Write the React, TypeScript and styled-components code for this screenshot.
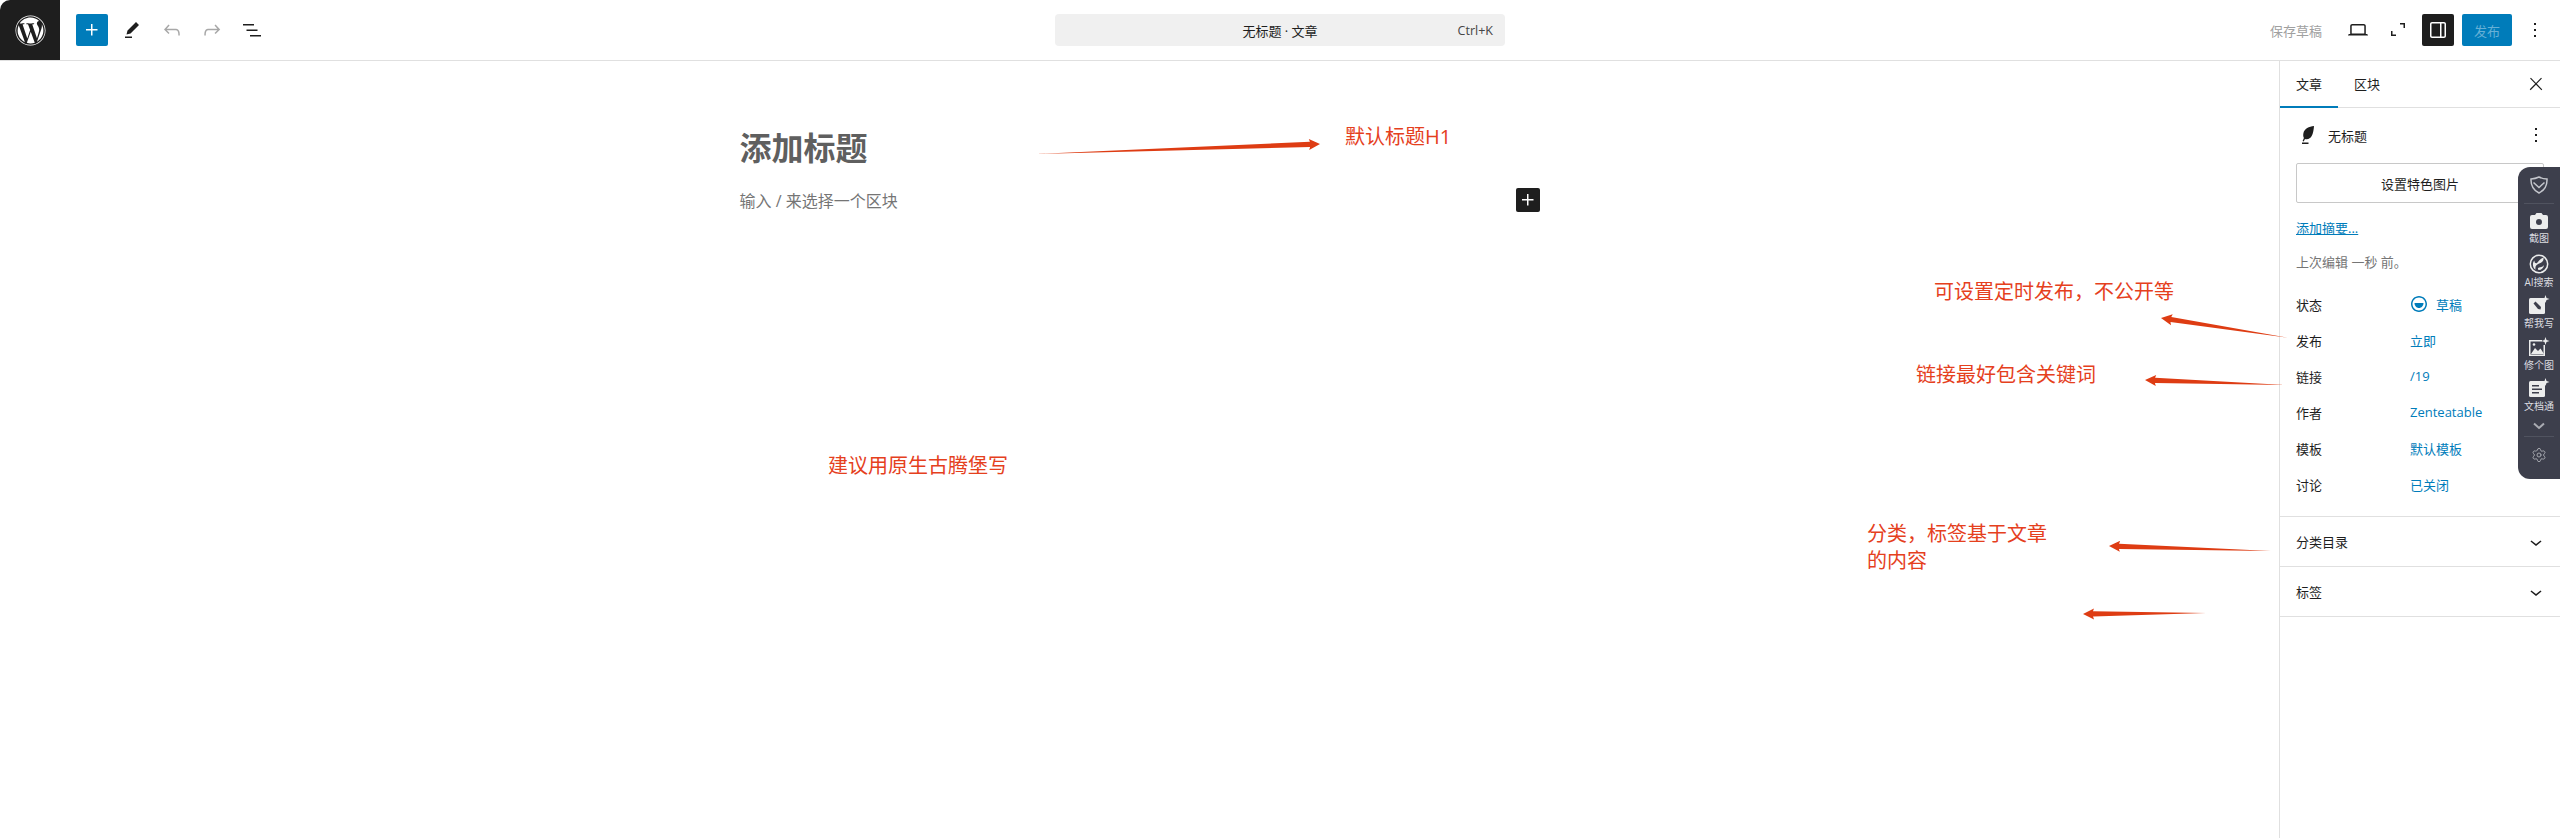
import React from "react";
import styled, { createGlobalStyle } from "styled-components";
import { FaWordpress } from "react-icons/fa";
import { Settings } from "lucide-react";

const GlobalStyle = createGlobalStyle`
  html, body {
    margin: 0;
    padding: 0;
    background: #fff;
  }
  body {
    font-family: "Open Sans", "Noto Sans CJK SC", sans-serif;
    font-size: 13px;
    color: #1e1e1e;
  }
  * {
    box-sizing: border-box;
  }
`;

const Page = styled.div`
  position: relative;
  width: 2560px;
  height: 838px;
  overflow: hidden;
  display: flex;
  flex-direction: column;
`;

const Header = styled.header`
  height: 61px;
  flex: none;
  display: grid;
  grid-template-columns: 1fr 450px 1fr;
  align-items: center;
  border-bottom: 1px solid #e0e0e0;
`;

const Group = styled.div<{ $end?: boolean }>`
  display: flex;
  align-items: center;
  gap: 8px;
  height: 60px;
  justify-content: ${(p) => (p.$end ? "flex-end" : "flex-start")};
  padding-right: ${(p) => (p.$end ? "9px" : "0")};
`;

const LogoBox = styled.div`
  width: 60px;
  height: 60px;
  margin-right: 8px;
  background: #1e1e1e;
  border-top-left-radius: 10px;
  color: #fff;
  display: flex;
  align-items: center;
  justify-content: center;
`;

const IconButton = styled.button<{ $variant?: "primary" | "dark" | "muted" }>`
  width: 32px;
  height: 32px;
  padding: 0;
  border: 0;
  border-radius: 2px;
  display: flex;
  align-items: center;
  justify-content: center;
  background: ${(p) =>
    p.$variant === "primary" ? "#007cba" : p.$variant === "dark" ? "#1e1e1e" : "transparent"};
  color: ${(p) =>
    p.$variant === "primary" || p.$variant === "dark"
      ? "#fff"
      : p.$variant === "muted"
        ? "#a8a8a8"
        : "#1e1e1e"};

  svg {
    fill: currentColor;
  }
`;

const CommandBar = styled.div`
  position: relative;
  height: 32px;
  border-radius: 4px;
  background: #f0f0f0;
  display: flex;
  align-items: center;
  justify-content: center;
  color: #1e1e1e;
  font-size: 13px;
`;

const Shortcut = styled.span`
  position: absolute;
  right: 12px;
  top: 8px;
  line-height: 18px;
  font-size: 12.5px;
  color: #454545;
`;

const SaveDraft = styled.span`
  margin-right: 12px;
  color: #a0a0a0;
  font-size: 13px;
`;

const PublishButton = styled.button`
  width: 50px;
  height: 32px;
  margin-right: -1px;
  padding: 0;
  border: 0;
  border-radius: 2px;
  background: #007cba;
  color: #66b0d6;
  font-family: inherit;
  font-size: 13px;
`;

const Body = styled.div`
  flex: 1;
  min-height: 0;
  display: flex;
`;

const Editor = styled.main`
  flex: 1;
  padding-top: 67px;
`;

const Column = styled.div`
  width: 800px;
  margin: 0 auto;
`;

const PostTitle = styled.h1`
  margin: 0 0 20px;
  font-size: 32px;
  line-height: 40px;
  font-weight: 700;
  color: #5f5f5f;
`;

const BlockRow = styled.div`
  height: 24px;
  display: flex;
  align-items: center;
  justify-content: space-between;
  font-size: 16px;
  color: #757575;
`;

const InsertButton = styled.span`
  width: 24px;
  height: 24px;
  border-radius: 2px;
  background: #1e1e1e;
  color: #fff;
  display: flex;

  svg {
    fill: currentColor;
  }
`;

const Sidebar = styled.aside`
  width: 281px;
  flex: none;
  border-left: 1px solid #e0e0e0;
`;

const Tabs = styled.div`
  height: 47px;
  display: flex;
  align-items: stretch;
  border-bottom: 1px solid #e0e0e0;
  padding-right: 8px;
`;

const Tab = styled.div<{ $active?: boolean }>`
  width: 58px;
  margin-bottom: -1px;
  display: flex;
  align-items: center;
  justify-content: center;
  font-size: 13px;
  border-bottom: 2px solid ${(p) => (p.$active ? "#007cba" : "transparent")};
`;

const TabClose = styled.div`
  margin-left: auto;
  width: 32px;
  display: flex;
  align-items: center;
  justify-content: center;

  svg {
    fill: #1e1e1e;
  }
`;

const PostPanel = styled.section`
  padding: 16px 16px 14px;
  border-bottom: 1px solid #e0e0e0;
`;

const PostHeading = styled.div`
  height: 22px;
  display: flex;
  align-items: center;
  gap: 8px;
  font-size: 13px;

  svg {
    fill: #1e1e1e;
    flex: none;
  }
`;

const HeadingMenu = styled.span`
  margin-left: auto;
  margin-right: -4px;
  display: flex;
`;

const FeaturedButton = styled.button`
  display: block;
  width: 100%;
  height: 40px;
  margin-top: 17px;
  padding: 0;
  background: #fff;
  border: 1px solid #c8c8c8;
  border-radius: 2px;
  font-family: inherit;
  font-size: 13px;
  color: #1e1e1e;
`;

const ExcerptLink = styled.a`
  display: block;
  margin-top: 15px;
  line-height: 20px;
  font-size: 13px;
  color: #007cba;
  text-decoration: underline;
`;

const LastEdited = styled.div`
  margin-top: 14px;
  line-height: 20px;
  font-size: 13px;
  color: #757575;
`;

const Meta = styled.dl`
  margin: 14px 0 0;
`;

const MetaRow = styled.div`
  height: 36px;
  display: grid;
  grid-template-columns: 114px 1fr;
  align-items: center;
`;

const MetaLabel = styled.dt`
  font-size: 13px;
`;

const MetaValue = styled.dd`
  margin: 0;
  display: flex;
  align-items: center;
  gap: 5px;
  font-size: 13px;
  color: #007cba;

  svg {
    fill: currentColor;
    margin: 0 0 0 -3px;
  }
`;

const Section = styled.section`
  height: 50px;
  padding: 0 16px;
  display: flex;
  align-items: center;
  justify-content: space-between;
  font-size: 13px;
  border-bottom: 1px solid #e0e0e0;

  svg {
    fill: #1e1e1e;
    margin-right: -4px;
  }
`;

const Note = styled.div<{ $x: number; $y: number }>`
  position: absolute;
  left: ${(p) => p.$x}px;
  top: ${(p) => p.$y}px;
  width: 190px;
  font-size: 20px;
  line-height: 27px;
  color: #e5401d;
  white-space: pre-line;
`;

const WideNote = styled(Note)`
  width: 260px;
`;

const ArrowLayer = styled.svg`
  position: absolute;
  left: 0;
  top: 0;
  pointer-events: none;
`;

const Dock = styled.div`
  position: absolute;
  left: 2518px;
  top: 167px;
  width: 42px;
  height: 312px;
  padding-top: 8px;
  background: #3d3f4c;
  border-radius: 12px 0 0 12px;
  display: flex;
  flex-direction: column;
  align-items: center;
  color: #eceded;
`;

const DockRule = styled.div`
  width: 30px;
  height: 1px;
  flex: none;
  background: #50535f;
`;

const DockItem = styled.div`
  height: 41.5px;
  flex: none;
  display: flex;
  flex-direction: column;
  align-items: center;

  svg {
    display: block;
  }
`;

const DockLabel = styled.span`
  margin-top: 1px;
  line-height: 14px;
  font-size: 10px;
  white-space: nowrap;
  color: #dcdde0;
`;

const DockTop = styled.div`
  height: 28px;
  flex: none;
`;

const DockChevron = styled.div`
  height: 17px;
  flex: none;
  margin-top: -1px;
`;

const DockGear = styled.div`
  margin-top: 10px;
  color: #a9abb2;
  display: flex;
`;

const Icon = ({ d, size = 24 }: { d: string; size?: number }) => (
  <svg width={size} height={size} viewBox="0 0 24 24" aria-hidden="true">
    <path d={d} />
  </svg>
);

const plus = "M11 12.5V17.5H12.5V12.5H17.5V11H12.5V6H11V11H6V12.5H11Z";
const pencil = "m19 7-3-3-8.5 8.5-1 4 4-1L19 7Zm-7 11.5H5V20h7v-1.5Z";
const undo =
  "M18.3 11.7c-.6-.6-1.4-.9-2.3-.9H6.7l2.9-3.3-1.1-1-4.5 5L8.5 16l1-1-2.7-2.7H16c.5 0 .9.2 1.3.5 1 1 1 3.4 1 4.5v.3h1.5v-.2c0-1.5 0-4.3-1.5-5.7z";
const redo =
  "M15.6 6.5l-1.1 1 2.9 3.3H8c-.9 0-1.7.3-2.3.9-1.4 1.5-1.4 4.2-1.4 5.6v.2h1.5v-.3c0-1.1 0-3.5 1-4.5.3-.3.7-.5 1.3-.5h9.2L14.5 15l1.1 1.1 4.6-4.6-4.6-5z";
const listView = "M3 6h11v1.5H3V6Zm3.5 5.5h11V13h-11v-1.5ZM21 17H10v1.5h11V17Z";
const laptop =
  "M20.5 16h-.7V8c0-1.1-.9-2-2-2H6.2c-1.1 0-2 .9-2 2v8h-.7c-.8 0-1.5.7-1.5 1.5h20c0-.8-.7-1.5-1.5-1.5zM5.7 8c0-.3.2-.5.5-.5h11.6c.3 0 .5.2.5.5v7.6H5.7V8z";
const fullscreen = "M14 5h5v5h-1.5V6.5H14V5ZM5 13h1.5v3.5H10V18H5v-5Z";
const drawer =
  "M18 4H6c-1.1 0-2 .9-2 2v12c0 1.1.9 2 2 2h12c1.1 0 2-.9 2-2V6c0-1.1-.9-2-2-2zm-4 14.5H6c-.3 0-.5-.2-.5-.5V6c0-.3.2-.5.5-.5h8v13zm4.5-.5c0 .3-.2.5-.5.5h-2.5v-13H18c.3 0 .5.2.5.5v12z";
const moreVertical = "M13 19h-2v-2h2v2zm0-6h-2v-2h2v2zm0-6h-2V5h2v2z";
const close =
  "M13 11.8l6.1-6.3-1-1-6.1 6.2-6.1-6.3-1 1 6.1 6.3-6.5 6.7 1 1 6.5-6.6 6.5 6.7 1-1z";
const chevronDown = "M17.5 11.6L12 16l-5.5-4.4.9-1.2L12 14l4.5-3.6 1 1.2z";
const feather =
  "M18 3c-5 .6-9.6 2.6-10.6 7.2-.4 1.9-.1 3.6.5 4.8L6.6 18l1.1.6L9 16c1.5.5 3.4.3 5-.9 2.6-2 3.6-7 4-12.1ZM6 19.5h6.5V21H6v-1.5Z";
const drafts =
  "M12 4c-4.4 0-8 3.6-8 8s3.6 8 8 8 8-3.6 8-8-3.6-8-8-8zm0 14.5c-3.6 0-6.5-2.9-6.5-6.5S8.4 5.5 12 5.5s6.5 2.9 6.5 6.5-2.9 6.5-6.5 6.5zM7.5 11h9c0 2.8-2 5-4.5 5s-4.5-2.2-4.5-5z";

type ArrowLine = { from: [number, number]; to: [number, number] };

const arrows: ArrowLine[] = [
  { from: [1036, 154], to: [1320, 144] },
  { from: [2289, 338], to: [2161, 318] },
  { from: [2285, 385], to: [2145, 380] },
  { from: [2271, 551], to: [2109, 546] },
  { from: [2206, 613], to: [2083, 614] },
];

// tapered stroke: hairline at the tail, thick just behind a small head
const arrowPoints = ({ from, to }: ArrowLine) => {
  const dx = to[0] - from[0];
  const dy = to[1] - from[1];
  const len = Math.hypot(dx, dy);
  const ux = dx / len;
  const uy = dy / len;
  const at = (back: number, side: number) =>
    `${to[0] - ux * back - uy * side},${to[1] - uy * back + ux * side}`;
  return [
    `${from[0]},${from[1]}`,
    at(10, 2.6),
    at(11, 5.5),
    at(0, 0),
    at(11, -5.5),
    at(10, -2.6),
  ].join(" ");
};

const Arrows = () => (
  <ArrowLayer width="2560" height="838">
    {arrows.map((a, i) => (
      <polygon key={i} points={arrowPoints(a)} fill="#de3c13" />
    ))}
  </ArrowLayer>
);

const Sparkle = ({ x, y }: { x: number; y: number }) => (
  <path
    transform={`translate(${x} ${y})`}
    d="M0-4 1-1 4 0 1 1 0 4-1 1-4 0-1-1Z"
    fill="currentColor"
  />
);

const ShieldIcon = () => (
  <svg width="20" height="20" viewBox="0 0 20 20" fill="none" stroke="#c4c6cc" strokeWidth="1.5">
    <path d="M10 2c2.6 1.3 5.2 1.9 8 2 .3 6.8-2.4 11.2-8 14C4.400 15.200 1.700 10.800 2 4c2.800-.1 5.400-.7 8-2Z" />
    <path d="M4.500 7.500 10 12.500l5.500-5" />
  </svg>
);

const CameraIcon = () => (
  <svg width="20" height="18" viewBox="0 0 20 18">
    <path
      d="M3 3h3l1.500-2h5L14 3h3a2 2 0 0 1 2 2v10a2 2 0 0 1-2 2H3a2 2 0 0 1-2-2V5a2 2 0 0 1 2-2Z"
      fill="currentColor"
    />
    <circle cx="10" cy="10" r="3" fill="#3d3f4c" />
  </svg>
);

const SwirlIcon = () => (
  <svg width="20" height="20" viewBox="0 0 20 20">
    <circle cx="10" cy="10" r="8.700" fill="none" stroke="currentColor" strokeWidth="1.500" />
    <path
      d="M14.500 3.500c.6 3.200-1.500 5-3.700 5.800-2.700 1-5 2.300-4.300 6.500C3.500 13.500 3 9 5.500 6.500c-.2 2 .8 3 2 2.700 1.500-.4 2.500-3.700 7-5.700Z"
      fill="currentColor"
    />
    <path d="M9.500 16c2.500.2 5-1.500 5.500-5-1.200 2-3.500 2.200-5 2.500-1.200.3-1.500 1.500-.5 2.500Z" fill="currentColor" />
  </svg>
);

const WriteIcon = () => (
  <svg width="22" height="20" viewBox="0 0 22 20" color="#eceded">
    <rect x="1" y="3" width="16" height="16" rx="1.500" fill="currentColor" />
    <path d="M5.500 8.500 7.500 6.500 13 12l-.5 2.500L10 14Z" fill="#3d3f4c" />
    <Sparkle x={17.500} y={4} />
  </svg>
);

const PictureIcon = () => (
  <svg width="22" height="20" viewBox="0 0 22 20" color="#eceded">
    <path d="M1 3h13v1.500H2.500v13h13V8H17v11H1V3Z" fill="currentColor" />
    <path d="M3 17l4-6 3 3 2.500-2.500L16 17Z" fill="currentColor" />
    <circle cx="6" cy="7.500" r="1.300" fill="currentColor" />
    <Sparkle x={17.500} y={4} />
  </svg>
);

const DocIcon = () => (
  <svg width="22" height="20" viewBox="0 0 22 20" color="#eceded">
    <rect x="1" y="3" width="16" height="16" rx="1.500" fill="currentColor" />
    <path d="M4 7h7v1.500H4V7Zm0 3.500h10V12H4v-1.500ZM4 14h7v1.500H4V14Z" fill="#3d3f4c" />
    <Sparkle x={17.500} y={4} />
  </svg>
);

const DockChevronIcon = () => (
  <svg width="14" height="14" viewBox="0 0 14 14" fill="none" stroke="#a9abb2" strokeWidth="2">
    <path d="M2 4.500 7 9l5-4.500" />
  </svg>
);

const dockItems = [
  { label: "截图", icon: <CameraIcon /> },
  { label: "AI搜索", icon: <SwirlIcon /> },
  { label: "帮我写", icon: <WriteIcon /> },
  { label: "修个图", icon: <PictureIcon /> },
  { label: "文档通", icon: <DocIcon /> },
];

const metaRows = [
  { label: "发布", value: "立即" },
  { label: "链接", value: "/19" },
  { label: "作者", value: "Zenteatable" },
  { label: "模板", value: "默认模板" },
  { label: "讨论", value: "已关闭" },
];

const App = () => (
  <Page>
    <GlobalStyle />
    <Header>
      <Group>
        <LogoBox>
          <FaWordpress size={31} />
        </LogoBox>
        <IconButton $variant="primary">
          <Icon d={plus} />
        </IconButton>
        <IconButton>
          <Icon d={pencil} />
        </IconButton>
        <IconButton $variant="muted">
          <Icon d={undo} />
        </IconButton>
        <IconButton $variant="muted">
          <Icon d={redo} />
        </IconButton>
        <IconButton>
          <Icon d={listView} />
        </IconButton>
      </Group>
      <CommandBar>
        无标题 · 文章
        <Shortcut>Ctrl+K</Shortcut>
      </CommandBar>
      <Group $end>
        <SaveDraft>保存草稿</SaveDraft>
        <IconButton>
          <Icon d={laptop} />
        </IconButton>
        <IconButton>
          <Icon d={fullscreen} />
        </IconButton>
        <IconButton $variant="dark">
          <Icon d={drawer} />
        </IconButton>
        <PublishButton>发布</PublishButton>
        <IconButton>
          <Icon d={moreVertical} />
        </IconButton>
      </Group>
    </Header>

    <Body>
      <Editor>
        <Column>
          <PostTitle>添加标题</PostTitle>
          <BlockRow>
            输入 / 来选择一个区块
            <InsertButton>
              <Icon d={plus} />
            </InsertButton>
          </BlockRow>
        </Column>
      </Editor>

      <Sidebar>
        <Tabs>
          <Tab $active>文章</Tab>
          <Tab>区块</Tab>
          <TabClose>
            <Icon d={close} size={20} />
          </TabClose>
        </Tabs>
        <PostPanel>
          <PostHeading>
            <Icon d={feather} />
            无标题
            <HeadingMenu>
              <Icon d={moreVertical} />
            </HeadingMenu>
          </PostHeading>
          <FeaturedButton>设置特色图片</FeaturedButton>
          <ExcerptLink>添加摘要...</ExcerptLink>
          <LastEdited>上次编辑 一秒 前。</LastEdited>
          <Meta>
            <MetaRow>
              <MetaLabel>状态</MetaLabel>
              <MetaValue>
                <Icon d={drafts} />
                草稿
              </MetaValue>
            </MetaRow>
            {metaRows.map((row) => (
              <MetaRow key={row.label}>
                <MetaLabel>{row.label}</MetaLabel>
                <MetaValue>{row.value}</MetaValue>
              </MetaRow>
            ))}
          </Meta>
        </PostPanel>
        <Section>
          分类目录
          <Icon d={chevronDown} />
        </Section>
        <Section>
          标签
          <Icon d={chevronDown} />
        </Section>
      </Sidebar>
    </Body>

    <Note $x={1345} $y={123}>默认标题H1</Note>
    <WideNote $x={1934} $y={278}>可设置定时发布，不公开等</WideNote>
    <WideNote $x={1916} $y={361}>链接最好包含关键词</WideNote>
    <Note $x={1867} $y={520}>{"分类，标签基于文章\n的内容"}</Note>
    <Note $x={828} $y={452}>建议用原生古腾堡写</Note>
    <Arrows />

    <Dock>
      <DockTop>
        <ShieldIcon />
      </DockTop>
      <DockRule />
      <DockItem style={{ marginTop: 8 }}>
        {dockItems[0].icon}
        <DockLabel>{dockItems[0].label}</DockLabel>
      </DockItem>
      {dockItems.slice(1).map((item) => (
        <DockItem key={item.label}>
          {item.icon}
          <DockLabel>{item.label}</DockLabel>
        </DockItem>
      ))}
      <DockChevron>
        <DockChevronIcon />
      </DockChevron>
      <DockRule />
      <DockGear>
        <Settings size={16} strokeWidth={1.4} />
      </DockGear>
    </Dock>
  </Page>
);

export default App;
